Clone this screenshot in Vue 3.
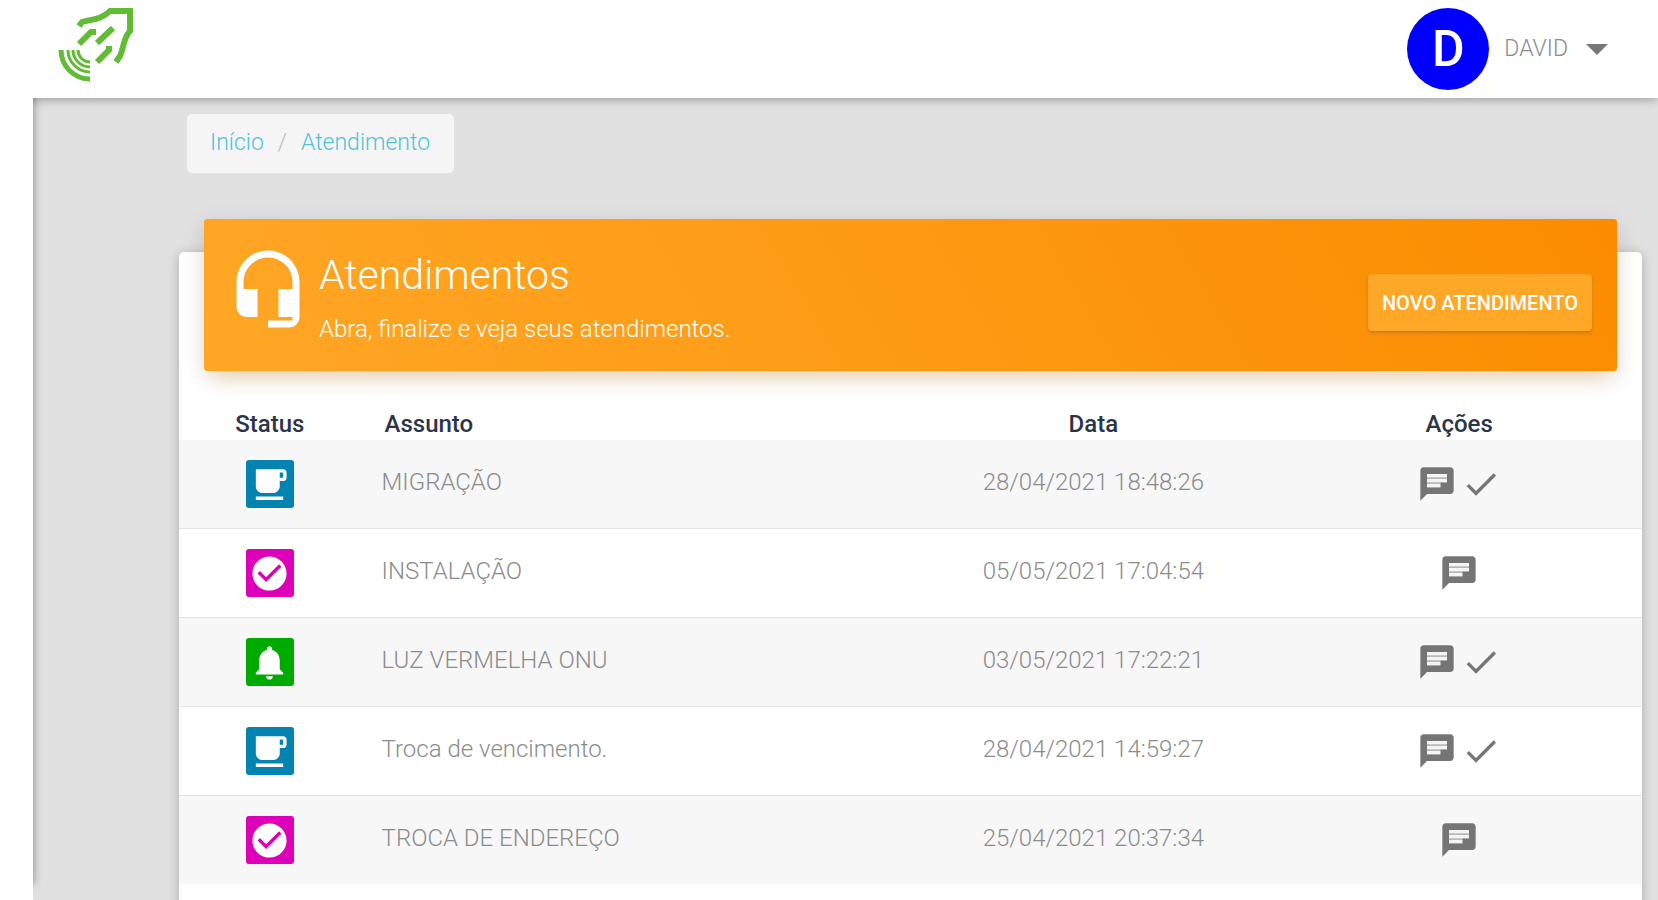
<script setup>
const icons = {
  cafe: 'M20 3H4v10c0 2.21 1.79 4 4 4h6c2.21 0 4-1.79 4-4v-3h2c1.11 0 2-.9 2-2V5c0-1.11-.89-2-2-2zm0 5h-2V5h2v3zM4 19h16v2H4z',
  done: 'M12 2C6.48 2 2 6.48 2 12s4.48 10 10 10 10-4.48 10-10S17.52 2 12 2zm-2 15l-5-5 1.41-1.41L10 14.17l7.59-7.59L19 8l-9 9z',
  bell: 'M12 22c1.1 0 2-.9 2-2h-4c0 1.1.89 2 2 2zm6-6v-5c0-3.07-1.64-5.64-4.5-6.32V4c0-.83-.67-1.5-1.5-1.5s-1.5.67-1.5 1.5v.68C7.63 5.36 6 7.92 6 11v5l-2 2v1h16v-1l-2-2z',
}

const tickets = [
  { status: 'cafe', label: 'Em espera', subject: 'MIGRAÇÃO', date: '28/04/2021 18:48:26', open: true },
  { status: 'done', label: 'Finalizado', subject: 'INSTALAÇÃO', date: '05/05/2021 17:04:54', open: false },
  { status: 'bell', label: 'Aberto', subject: 'LUZ VERMELHA ONU', date: '03/05/2021 17:22:21', open: true },
  { status: 'cafe', label: 'Em espera', subject: 'Troca de vencimento.', date: '28/04/2021 14:59:27', open: true },
  { status: 'done', label: 'Finalizado', subject: 'TROCA DE ENDEREÇO', date: '25/04/2021 20:37:34', open: false },
]
</script>

<template>
  <div class="page">
    <header class="topbar">
      <a class="brand" href="#" aria-label="Página inicial">
        <svg viewBox="0 0 100 90" width="100" height="90" fill="none" stroke="#62bb35">
          <path d="M29 26 L32 22 C42 19 51 20 60 11 H80 V31 C73 38 74 48 70 56 L66 62" stroke-width="6" />
          <path d="M29 44 L41 32 H46 M47 43 L63 28 M47 62 L59 50 V46" stroke-width="6" />
          <path d="M11 50 A29 29 0 0 0 40 79" stroke-width="5" />
          <path d="M18 50 A22 22 0 0 0 40 72 M23 50 A17 17 0 0 0 40 67 M28 50 A12 12 0 0 0 40 62" stroke-width="3" />
        </svg>
      </a>
      <button class="user" type="button">
        <span class="avatar">D</span>
        <span class="name">DAVID</span>
        <svg class="caret" viewBox="0 0 22 11" width="22" height="11"><path d="M0 0H22L11 11Z" fill="#777" /></svg>
      </button>
    </header>

    <div class="body">
      <aside class="rail"></aside>
      <main class="content">
        <nav class="crumbs" aria-label="Navegação">
          <a href="#">Início</a>
          <span class="sep">/</span>
          <a href="#">Atendimento</a>
        </nav>

        <section class="card">
          <div class="banner">
            <svg class="headset" viewBox="0 0 24 24" fill="#fff">
              <path d="M12 1c-4.97 0-9 4.03-9 9v7c0 1.66 1.34 3 3 3h3v-8H5v-2c0-3.87 3.13-7 7-7s7 3.13 7 7v2h-4v8h4v1h-7v2h6c1.66 0 3-1.34 3-3V10c0-4.97-4.03-9-9-9z" />
            </svg>
            <div class="heading">
              <h1>Atendimentos</h1>
              <p>Abra, finalize e veja seus atendimentos.</p>
            </div>
            <button class="new" type="button">NOVO ATENDIMENTO</button>
          </div>

          <table>
            <thead>
              <tr>
                <th class="c-status">Status</th>
                <th class="c-subject">Assunto</th>
                <th class="c-date">Data</th>
                <th class="c-actions">Ações</th>
              </tr>
            </thead>
            <tbody>
              <tr v-for="t in tickets" :key="t.date">
                <td>
                  <span class="badge" :class="t.status" role="img" :aria-label="t.label">
                    <svg viewBox="0 0 24 24" width="41" height="41" fill="#fff"><path :d="icons[t.status]" /></svg>
                  </span>
                </td>
                <td class="text subject">{{ t.subject }}</td>
                <td class="text">{{ t.date }}</td>
                <td>
                  <div class="actions">
                    <button type="button" aria-label="Mensagens">
                      <svg viewBox="0 0 24 24" width="40" height="40" fill="#757575">
                        <path d="M6 6h12v5h-4v3H6z" fill="#b8b8b8" />
                        <path d="M20 2H4c-1.1 0-1.99.9-1.99 2L2 22l4-4h14c1.1 0 2-.9 2-2V4c0-1.1-.9-2-2-2zM6 6v8h8v-3h4V6z" fill-rule="evenodd" />
                        <path d="M6 6h12v2H6zM6 9h12v2H6zM6 12h8v2H6z" fill="#f4f4f4" />
                      </svg>
                    </button>
                    <button v-if="t.open" type="button" aria-label="Finalizar">
                      <svg viewBox="0 0 24 24" width="40" height="40" fill="#757575">
                        <path d="M9 16.2L4.8 12l-1.4 1.4L9 19 21 7l-1.4-1.4L9 16.2z" />
                      </svg>
                    </button>
                  </div>
                </td>
              </tr>
            </tbody>
          </table>
        </section>
      </main>
    </div>
  </div>
</template>

<style>
body {
  margin: 0;
  background: #e1e1e1;
}
</style>

<style scoped>
.page {
  height: 100vh;
  display: flex;
  flex-direction: column;
  overflow: hidden;
  background: #e1e1e1;
  font-family: Roboto, "Noto Sans", sans-serif;
  font-weight: 300;
  font-size: 24px;
  line-height: 32px;
  color: #8c8c8c;
}
svg {
  display: block;
}
button {
  font: inherit;
  color: inherit;
  background: none;
  border: 0;
  padding: 0;
  cursor: pointer;
}
a {
  text-decoration: none;
}
.topbar {
  position: relative;
  z-index: 2;
  flex: none;
  display: flex;
  align-items: center;
  justify-content: space-between;
  height: 98px;
  padding: 0 50px;
  box-sizing: border-box;
  background: #fff;
  box-shadow: 0 1px 10px rgba(0, 0, 0, 0.35);
}
.brand {
  height: 98px;
}
.user {
  display: flex;
  align-items: center;
  font-size: 23px;
}
.avatar {
  width: 82px;
  height: 82px;
  border-radius: 50%;
  background: #00f;
  color: #fff;
  font-size: 50px;
  font-weight: 500;
  line-height: 82px;
  text-align: center;
}
.name {
  margin: 0 18px 0 15px;
}
.body {
  flex: 1;
  display: flex;
  min-height: 0;
}
.rail {
  position: relative;
  z-index: 3;
  flex: none;
  width: 33px;
  background: #fff;
  box-shadow: 1px -16px 8px rgba(0, 0, 0, 0.35);
  clip-path: inset(0 -20px 0 0);
}
.content {
  flex: 1;
  min-width: 0;
  padding: 16px 16px 0 146px;
}
.crumbs {
  display: flex;
  width: fit-content;
  margin-left: 8px;
  padding: 13px 24px 14px 23px;
  background: #f5f5f5;
  border-radius: 5px;
  font-size: 23px;
}
.crumbs a {
  color: #4fc3d5;
}
.sep {
  padding: 0 14px;
  color: #bbb;
}
.card {
  margin-top: 79px;
  height: 100vh;
  background: #fff;
  border-radius: 5px;
  box-shadow: 0 2px 12px rgba(0, 0, 0, 0.25);
}
.banner {
  position: relative;
  top: -33px;
  display: flex;
  align-items: flex-start;
  height: 152px;
  margin: 0 25px;
  padding: 28px 25px 0 22px;
  box-sizing: border-box;
  border-radius: 3px;
  color: #fff;
  background: linear-gradient(60deg, #ffa726, #fb8c00);
  box-shadow: 0 12px 20px -8px rgba(255, 152, 0, 0.28), 0 6px 24px rgba(0, 0, 0, 0.12);
}
.headset {
  flex: none;
  width: 84px;
  height: 84px;
}
.heading {
  flex: 1;
  margin-left: 9px;
}
h1 {
  margin: 0 0 10px;
  font-size: 41px;
  font-weight: 300;
  line-height: 56px;
}
p {
  margin: 0;
}
.new {
  margin-top: 27px;
  padding: 13px 14px 12px;
  border-radius: 4px;
  background: #ffa726;
  font-size: 20px;
  font-weight: 500;
  box-shadow: 0 2px 3px rgba(150, 110, 50, 0.5);
}
table {
  width: 100%;
  border-collapse: collapse;
  table-layout: fixed;
  text-align: center;
}
th {
  box-sizing: border-box;
  height: 36px;
  padding: 4px 0 0;
  font-size: 24px;
  font-weight: 500;
  color: #2c3548;
}
.c-status {
  width: 12%;
}
.c-subject {
  width: 38%;
  padding-left: 30px;
  text-align: left;
}
.c-date {
  width: 25%;
}
.c-actions {
  width: 25%;
}
td {
  height: 88px;
  padding: 0;
}
tbody tr + tr td {
  border-top: 1px solid #e4e4e4;
}
tbody tr:nth-child(odd) {
  background: #f7f7f7;
}
tbody td:first-child {
  padding-left: 6px;
}
.text {
  height: 84px;
  padding-bottom: 4px;
}
.subject {
  padding-left: 27px;
  text-align: left;
}
.badge {
  display: flex;
  align-items: center;
  justify-content: center;
  width: 48px;
  height: 48px;
  margin: 0 auto;
  border-radius: 3px;
}
thead .c-status {
  padding-left: 6px;
}
.cafe {
  background: #0383af;
}
.done {
  background: #dd00b8;
}
.bell {
  background: #00ab00;
}
.actions {
  display: flex;
  justify-content: center;
  gap: 4px;
}
</style>
